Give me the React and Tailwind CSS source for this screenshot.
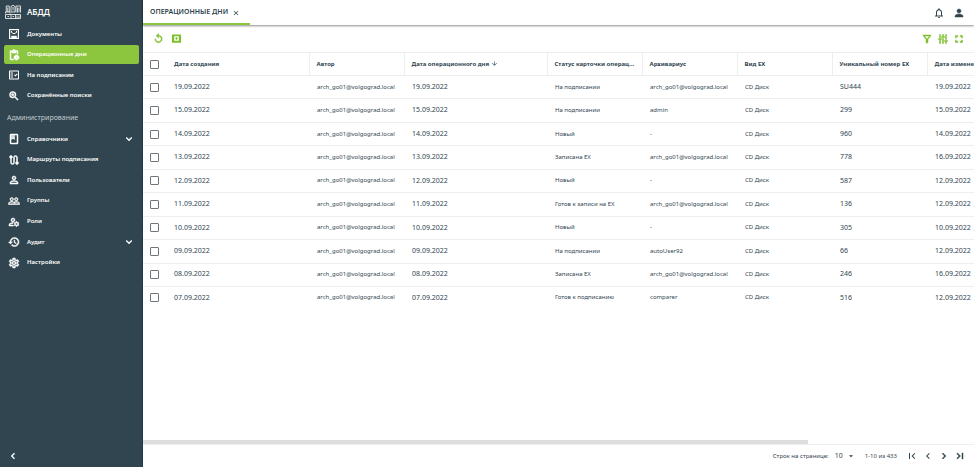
import React from 'react';
import {
    MdOutlineFactCheck, MdSavedSearch, MdOutlineClass, MdRoute, MdPersonOutline, MdPeopleOutline,
    MdOutlineManageAccounts, MdHistory, MdOutlineSettings, MdExpandMore, MdChevronLeft, MdChevronRight,
    MdClose, MdNotificationsNone, MdPerson, MdReplay, MdOutlineFilterAlt, MdTune, MdFullscreen,
    MdArrowDownward, MdFirstPage, MdLastPage, MdArrowDropDown, MdPendingActions,
} from 'react-icons/md';

// the icons' transparent bounding path must stay unstroked
const BOLD = '[&>path:not([fill=none])]:stroke-1';

function Logo() {
    return (
        <svg viewBox="0 0 32 28" className="h-[14px] w-4" fill="none" stroke="currentColor" strokeWidth="1.6" aria-hidden="true">
            <path d="M1 17V14M1 14H10M10 17V14M2.5 14V2H8.5V14M5.5 14V5" />
            <path d="M12 14V4Q12 1 16 1Q20 1 20 4V14ZM16 4V11" />
            <path d="M22 15V2H31V15M25 15V5M28 15V5" />
            <path d="M1 19H31V27H1ZM12 19V27M21 19V27M5 23H8M15 23H18M24 21V27M28 21V27" />
        </svg>
    );
}

function DocumentsIcon({ className }) {
    return (
        <svg viewBox="0 0 24 24" className={className} fill="none" stroke="currentColor" strokeWidth="2.4" aria-hidden="true">
            <g>
                <rect x="3.2" y="3.2" width="17.6" height="17.6" />
                <path d="M7 6V9Q12 14 17 9V6" strokeWidth="2" />
                <path d="M7 16H17V20H7Z" fill="currentColor" strokeWidth="1" />
            </g>
        </svg>
    );
}

function StoreIcon({ className }) {
    return (
        <svg viewBox="0 0 24 24" className={className} fill="currentColor" aria-hidden="true">
            <path fillRule="evenodd" d="M3 3H21Q22 3 22 4V20Q22 21 21 21H3Q2 21 2 20V4Q2 3 3 3ZM7 7V17H17V7Z" />
            <path d="M10.5 9H13.5V11.500H15.500L12 15.500L8.500 11.500H10.5Z" />
        </svg>
    );
}

const mainMenu = [
    { label: 'Документы', icon: DocumentsIcon },
    { label: 'Операционные дни', icon: MdPendingActions, active: true },
    { label: 'На подписании', icon: MdOutlineFactCheck },
    { label: 'Сохранённые поиски', icon: MdSavedSearch },
];

const adminMenu = [
    { label: 'Справочники', icon: MdOutlineClass, expandable: true },
    { label: 'Маршруты подписания', icon: MdRoute },
    { label: 'Пользователи', icon: MdPersonOutline },
    { label: 'Группы', icon: MdPeopleOutline },
    { label: 'Роли', icon: MdOutlineManageAccounts },
    { label: 'Аудит', icon: MdHistory, expandable: true },
    { label: 'Настройки', icon: MdOutlineSettings },
];

const GO01 = 'arch_go01@volgograd.local';

const rows = [
    { date: '19.09.2022', status: 'На подписании', archivist: GO01, number: 'SU444', changed: '19.09.2022' },
    { date: '15.09.2022', status: 'На подписании', archivist: 'admin', number: '299', changed: '15.09.2022' },
    { date: '14.09.2022', status: 'Новый', archivist: '-', number: '960', changed: '14.09.2022' },
    { date: '13.09.2022', status: 'Записана ЕХ', archivist: GO01, number: '778', changed: '16.09.2022' },
    { date: '12.09.2022', status: 'Новый', archivist: '-', number: '587', changed: '12.09.2022' },
    { date: '11.09.2022', status: 'Готов к записи на ЕХ', archivist: GO01, number: '136', changed: '12.09.2022' },
    { date: '10.09.2022', status: 'Новый', archivist: '-', number: '305', changed: '10.09.2022' },
    { date: '09.09.2022', status: 'На подписании', archivist: 'autoUser92', number: '66', changed: '12.09.2022' },
    { date: '08.09.2022', status: 'Записана ЕХ', archivist: GO01, number: '246', changed: '16.09.2022' },
    { date: '07.09.2022', status: 'Готов к подписанию', archivist: 'comparer', number: '516', changed: '12.09.2022' },
];

const columns = [
    { title: 'Дата создания', first: true },
    { title: 'Автор' },
    { title: 'Дата операционного дня', sorted: true },
    { title: 'Статус карточки операц...' },
    { title: 'Архивариус' },
    { title: 'Вид ЕХ' },
    { title: 'Уникальный номер ЕХ' },
    { title: 'Дата изменения' },
];

function MenuItem({ item }) {
    const Icon = item.icon;
    return (
        <li className="flex items-center">
            <a
                href="#"
                className={`flex h-[19px] w-full items-center rounded-xs px-1 text-[6px] font-semibold text-white ${item.active ? 'bg-[#8cc63e]' : ''}`}
            >
                <Icon className={`h-3 w-3 shrink-0 ${BOLD}`} />
                <span className="ml-[7px] flex-1 whitespace-nowrap">{item.label}</span>
                {item.expandable && <MdExpandMore className={`h-3 w-3 shrink-0 ${BOLD}`} />}
            </a>
        </li>
    );
}

function Checkbox({ label }) {
    return (
        <input
            type="checkbox"
            aria-label={label}
            className="block h-[9px] w-[9px] appearance-none rounded-[1px] border border-[#6f777b] bg-white"
        />
    );
}

function Sidebar() {
    return (
        <aside className="flex w-[143px] shrink-0 flex-col border-r border-[#1f3a4a] bg-[#30454f] text-white">
            <div className="flex h-6 items-center gap-[6px] pl-[5px]">
                <Logo />
                <span className="text-[8px] font-semibold">АБДД</span>
            </div>
            <nav>
                <ul className="grid h-[82px] auto-rows-fr pr-[3px] pl-1">
                    {mainMenu.map((item) => <MenuItem key={item.label} item={item} />)}
                </ul>
                <p className="flex h-[23px] items-center pt-[2px] pl-[7px] text-[7px] text-[#c3cace]">Администрирование</p>
                <ul className="grid h-36 auto-rows-fr pr-[3px] pl-1">
                    {adminMenu.map((item) => <MenuItem key={item.label} item={item} />)}
                </ul>
            </nav>
            <button aria-label="Свернуть меню" className="mt-auto mb-[5px] ml-[7px] self-start">
                <MdChevronLeft className={`h-3 w-3 ${BOLD}`} />
            </button>
        </aside>
    );
}

function Toolbar() {
    return (
        <div className="flex h-[27px] shrink-0 items-center justify-between pr-[9px] pl-[10px] text-[#7fbf2c]">
            <div className="flex gap-[7px]">
                <button aria-label="Обновить"><MdReplay className={`h-[11px] w-[11px] ${BOLD}`} /></button>
                <button aria-label="В архив"><StoreIcon className="h-[11px] w-[11px]" /></button>
            </div>
            <div className="flex gap-1">
                <button aria-label="Фильтр"><MdOutlineFilterAlt className={`h-3 w-3 ${BOLD}`} /></button>
                <button aria-label="Настройка колонок"><MdTune className={`h-3 w-3 rotate-90 ${BOLD}`} /></button>
                <button aria-label="На весь экран"><MdFullscreen className={`h-3 w-3 ${BOLD}`} /></button>
            </div>
        </div>
    );
}

function DaysTable() {
    return (
        <table className="h-[257px] w-[1039px] table-fixed border-collapse text-left">
            <colgroup>
                <col className="w-[23px]" />
                <col className="w-[143px]" />
                <col className="w-[95px]" />
                <col className="w-[143px]" />
                <col className="w-[95px]" />
                <col className="w-[95px]" />
                <col className="w-[95px]" />
                <col className="w-[95px]" />
                <col />
            </colgroup>
            <thead>
                <tr className="h-[23px] border-y border-[#eceeef]">
                    <th className="p-0 pl-[7px]"><Checkbox label="Выбрать все" /></th>
                    {columns.map((col) => (
                        <th
                            key={col.title}
                            className={`h-[23px] py-0 text-[6px] font-bold whitespace-nowrap ${col.first ? 'px-2' : 'border-l border-[#eceeef] px-[7px]'}`}
                        >
                            {col.title}
                            {col.sorted && <MdArrowDownward className="ml-[2px] inline h-[7px] w-[7px]" />}
                        </th>
                    ))}
                </tr>
            </thead>
            <tbody>
                {rows.map((row) => (
                    <tr key={row.date} className="border-b border-[#eceeef] text-[6px] last:border-b-0">
                        <td className="p-0 pl-[7px]"><Checkbox label={`Выбрать ${row.date}`} /></td>
                        <td className="px-2 py-0 text-[7px]">{row.date}</td>
                        <td className="px-2 py-0">{GO01}</td>
                        <td className="px-2 py-0 text-[7px]">{row.date}</td>
                        <td className="px-2 py-0">{row.status}</td>
                        <td className="px-2 py-0">{row.archivist}</td>
                        <td className="px-2 py-0">CD Диск</td>
                        <td className="px-2 py-0 text-[7px]">{row.number}</td>
                        <td className="px-2 py-0 text-[7px]">{row.changed}</td>
                    </tr>
                ))}
            </tbody>
        </table>
    );
}

function Pagination() {
    return (
        <footer className="flex h-[22px] shrink-0 items-center justify-end pr-2 text-[6px]">
            <label htmlFor="page-size">Строк на странице:</label>
            <div className="relative ml-[6px] flex items-center">
                <select id="page-size" className="w-[21px] appearance-none bg-transparent text-[7px]" defaultValue="10">
                    <option>10</option>
                    <option>25</option>
                    <option>50</option>
                </select>
                <MdArrowDropDown className="pointer-events-none absolute right-0 h-[10px] w-[10px]" />
            </div>
            <span className="ml-[9px]">1-10 из 433</span>
            <div className="ml-[9px] flex gap-1">
                <button aria-label="Первая страница"><MdFirstPage className="h-3 w-3" /></button>
                <button aria-label="Предыдущая страница"><MdChevronLeft className="h-3 w-3" /></button>
                <button aria-label="Следующая страница"><MdChevronRight className={`h-3 w-3 ${BOLD}`} /></button>
                <button aria-label="Последняя страница"><MdLastPage className={`h-3 w-3 ${BOLD}`} /></button>
            </div>
        </footer>
    );
}

export default function App() {
    return (
        <div className="flex h-screen overflow-hidden bg-white font-['Noto_Sans',sans-serif] text-[#30454f]">
            <Sidebar />
            <main className="flex min-w-0 flex-1 flex-col">
                {/* Tabs */}
                <header className="flex h-[25px] shrink-0 justify-between shadow-[0_1px_2px_rgba(0,0,0,0.45)]">
                    <div className="flex items-center gap-1 border-b-2 border-[#8cc63e] pt-[2px] pr-[10px] pl-[7px]">
                        <a href="#" className="text-[7px] font-semibold">ОПЕРАЦИОННЫЕ ДНИ</a>
                        <button aria-label="Закрыть вкладку"><MdClose className="h-2 w-2" /></button>
                    </div>
                    <div className="flex items-center gap-2 pr-[9px]">
                        <button aria-label="Уведомления"><MdNotificationsNone className="h-3 w-3" /></button>
                        <button aria-label="Профиль"><MdPerson className={`h-3 w-3 ${BOLD}`} /></button>
                    </div>
                </header>

                <Toolbar />

                <div className="min-h-0 flex-1 overflow-hidden">
                    <DaysTable />
                </div>

                {/* Horizontal scroll position */}
                <div className="h-[5px] shrink-0 border-b border-[#eceeef]">
                    <div className="h-1 w-4/5 bg-[#dedede]" />
                </div>

                <Pagination />
            </main>
        </div>
    );
}
